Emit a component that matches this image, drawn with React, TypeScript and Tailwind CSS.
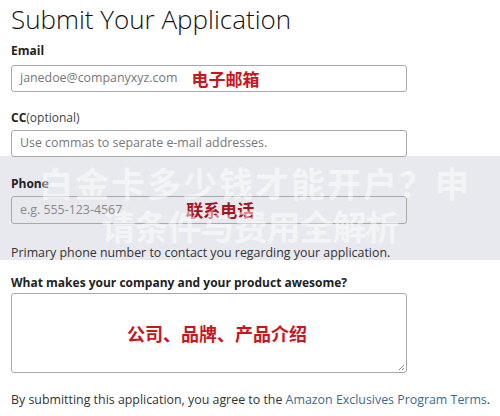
import React from 'react';

const font = { fontFamily: '"Open Sans", "Noto Sans CJK SC", sans-serif' };
const cjk = { fontFamily: '"Noto Sans CJK SC", sans-serif' };

const App: React.FC = () => {
    return (
        <div className="relative w-[500px] h-[416px] overflow-hidden bg-white text-[#222]" style={font}>
            {/* watermark band */}
            <div className="absolute left-0 top-[156px] w-full h-[104px] bg-[#e8e9ee]" />

            <div className="relative px-[11px]">
                <h1 className="text-[26px] font-light leading-[36px] text-[#111] pt-[1px]">Submit Your Application</h1>

                <label className="block mt-[6px] text-[12px] font-bold leading-[16px]">Email</label>
                <div className="mt-[6px] w-[396px] h-[27px] border border-[#a9a9a9] rounded-[3px] flex items-center px-[8px]">
                    <span className="text-[12.4px] text-[#777]">janedoe@companyxyz.com</span>
                    <span className="ml-[14px] text-[17px] font-bold text-[#c9161d]" style={cjk}>电子邮箱</span>
                </div>

                <label className="block mt-[18px] text-[12px] leading-[16px]">
                    <span className="font-bold">CC</span>
                    <span className="text-[#444]">(optional)</span>
                </label>
                <div className="mt-[4px] w-[396px] h-[27px] border border-[#a9a9a9] rounded-[3px] flex items-center px-[8px]">
                    <span className="text-[12.4px] text-[#777]">Use commas to separate e-mail addresses.</span>
                </div>

                <label className="block mt-[19px] text-[12px] font-bold leading-[16px]">Phone</label>
                <div className="mt-[4px] w-[396px] h-[28px] border border-[#a9a9a9] rounded-[3px] flex items-center px-[8px]">
                    <span className="text-[12.4px] text-[#888]">e.g. 555-123-4567</span>
                    <span className="ml-[64px] text-[17px] font-bold text-[#a8141c]" style={cjk}>联系电话</span>
                </div>
                <p className="mt-[20px] text-[12.4px] leading-[18px] text-[#333]">Primary phone number to contact you regarding your application.</p>

                <label className="block mt-[13px] text-[12px] font-bold leading-[16px]">What makes your company and your product awesome?</label>
                <div className="relative mt-[2px] w-[396px] h-[80px] border border-[#a9a9a9] rounded-[3px] flex items-center justify-center">
                    <span className="text-[18px] font-bold text-[#c9161d] ml-[16px]" style={cjk}>公司、品牌、产品介绍</span>
                    <svg className="absolute right-[1px] bottom-[1px]" width="7" height="7" viewBox="0 0 7 7">
                        <path d="M6 1L1 6M6 4L4 6" stroke="#888" strokeWidth="1" />
                    </svg>
                </div>

                <p className="mt-[18px] text-[12.4px] leading-[18px] text-[#333] whitespace-nowrap">
                    By submitting this application, you agree to the <span className="text-[#3b6a8e]">Amazon Exclusives Program Terms</span>.
                </p>
            </div>

            <div className="absolute left-0 top-[156px] w-full h-[104px] flex flex-col items-center pt-[6px]">
                <div className="text-[34px] font-bold leading-[42px] text-white/50 tracking-[2px] ml-[10px]" style={cjk}>白金卡多少钱才能开户？申</div>
                <div className="text-[34px] font-bold leading-[44px] text-white/50 tracking-[-1px]" style={cjk}>请条件与费用全解析</div>
            </div>
        </div>
    );
};

export default App;
